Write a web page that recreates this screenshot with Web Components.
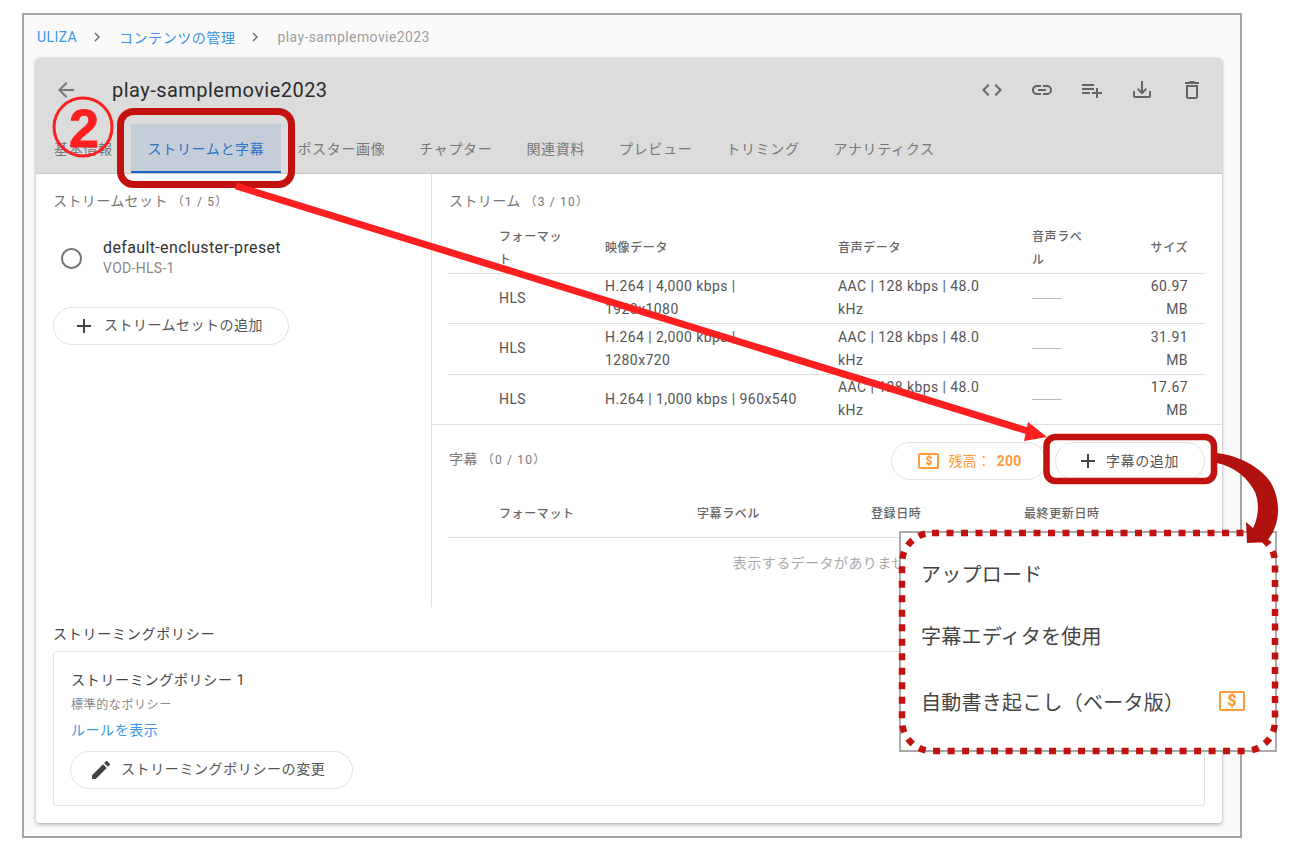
<!DOCTYPE html>
<html lang="ja">
<head>
<meta charset="utf-8">
<title>ULIZA</title>
<style>
html,body{margin:0;padding:0;background:#fff;height:852px;overflow:hidden}
body{font-family:Roboto,"Noto Sans CJK JP",sans-serif;color:#444;position:relative}
</style>
</head>
<body>
<ul-frame>
  <ul-breadcrumb></ul-breadcrumb>
  <ul-card>
    <ul-header slot="header"></ul-header>
    <ul-tabs slot="tabs"></ul-tabs>
    <ul-sets slot="left"></ul-sets>
    <ul-streams slot="right"></ul-streams>
    <ul-captions slot="right"></ul-captions>
    <ul-policy slot="bottom"></ul-policy>
  </ul-card>
</ul-frame>
<ul-annotations></ul-annotations>
<ul-menu></ul-menu>
<script>
const P={
 back:"M20 11H7.83l5.59-5.59L12 4l-8 8 8 8 1.41-1.41L7.83 13H20v-2z",
 code:"M9.4 16.6L4.8 12l4.6-4.6L8 6l-6 6 6 6 1.4-1.4zm5.2 0l4.6-4.6-4.6-4.6L16 6l6 6-6 6-1.4-1.4z",
 link:"M3.9 12c0-1.71 1.39-3.1 3.1-3.1h4V7H7c-2.76 0-5 2.24-5 5s2.24 5 5 5h4v-1.9H7c-1.71 0-3.1-1.39-3.1-3.1zM8 13h8v-2H8v2zm9-6h-4v1.9h4c1.71 0 3.1 1.39 3.1 3.1s-1.39 3.1-3.1 3.1h-4V17h4c2.76 0 5-2.24 5-5s-2.24-5-5-5z",
 list:"M14 10H2v2h12v-2zm0-4H2v2h12V6zm4 8v-4h-2v4h-4v2h4v4h2v-4h4v-2h-4zM2 16h8v-2H2v2z",
 dl:"M19 13v5H5v-5H3v5c0 1.1.9 2 2 2h14c1.1 0 2-.9 2-2v-5h-2zM13 12.67l2.59-2.58L17 11.5l-5 5-5-5 1.41-1.41L11 12.67V3h2z",
 del:"M6 19c0 1.1.9 2 2 2h8c1.1 0 2-.9 2-2V7H6v12zM8 9h8v10H8V9zm7.5-5l-1-1h-5l-1 1H5v2h14V4z",
 plus:"M19 13h-6v6h-2v-6H5v-2h6V5h2v6h6v2z",
 edit:"M3 17.25V21h3.75L17.81 9.94l-3.75-3.75L3 17.25zM20.71 7.04c.39-.39.39-1.02 0-1.41l-2.34-2.34c-.39-.39-1.02-.39-1.41 0l-1.83 1.83 3.75 3.75 1.83-1.83z"
};
const icon=(n,c="#666",s=24)=>`<svg width="${s}" height="${s}" viewBox="0 0 24 24" style="display:block;flex:none"><path fill="${c}" d="${P[n]}"/></svg>`;
const coin=(w,h,fs,b=2)=>`<span style="display:inline-flex;flex:none;align-items:center;justify-content:center;box-sizing:border-box;width:${w}px;height:${h}px;border:${b}px solid #ff9b3d;border-radius:2px;color:#ff9b3d;font:900 ${fs}px/1 Roboto,sans-serif">$</span>`;
const define=(name,html)=>customElements.define(name,class extends HTMLElement{
  constructor(){super();this.attachShadow({mode:"open"}).innerHTML=html;}
});
const pillCss=`.pill{display:inline-flex;align-items:center;box-sizing:border-box;height:38px;border:1px solid #e2e2e2;border-radius:19px;background:#fff;color:#555;font-size:14px;letter-spacing:.5px;white-space:nowrap}
.pill>span.x{margin-bottom:3px}`;

define("ul-frame",`<style>:host{display:block;box-sizing:border-box;width:1220px;height:825px;margin:13px 0 0 22px;border:2px solid #a8a4a4;background:#fafafa;padding:0 18px 0 12px}</style><slot></slot>`);

const chev=`<svg style="margin:0 15px 0 14px;flex:none" width="12" height="12" viewBox="0 0 12 12"><path d="M4 2l4 4-4 4" fill="none" stroke="#666" stroke-width="1.4"/></svg>`;
define("ul-breadcrumb",`<style>:host{display:flex;align-items:center;height:43px;font-size:14px;letter-spacing:.55px;white-space:nowrap}
a{color:#3b95e8}span{color:#9e9e9e;letter-spacing:.4px;margin-left:1px}svg+a{margin-left:1px}</style>
<a style="margin-left:1px;letter-spacing:.4px">ULIZA</a>${chev}<a>コンテンツの管理</a>${chev}<span>play-samplemovie2023</span>`);

define("ul-card",`<style>:host{display:block;height:765px;background:#fff;border-radius:4px;box-shadow:0 2px 4px rgba(0,0,0,.25),0 0 3px rgba(0,0,0,.1);overflow:hidden}
.head{background:#dcdcdc;height:116px;box-sizing:border-box;border-bottom:1px solid #c8c8c8;display:flex;flex-direction:column}
.body{display:grid;grid-template-columns:396px 1fr;height:433px}
.l{border-right:1px solid #e0e0e0;padding:17px 0 0 17px}
</style>
<div class="head"><slot name="header"></slot><slot name="tabs"></slot></div>
<div class="body"><div class="l"><slot name="left"></slot></div><div><slot name="right"></slot></div></div>
<slot name="bottom"></slot>`);

define("ul-header",`<style>:host{display:flex;align-items:center;height:66px;padding:0 18px 2px 18px;box-sizing:border-box}
.t{margin-left:34px;font-size:20px;letter-spacing:.47px;color:#2b2b2b;flex:1}
.i{display:flex;gap:26px}</style>
${icon("back","#777")}<div class="t">play-samplemovie2023</div>
<div class="i">${icon("code")}${icon("link")}${icon("list")}${icon("dl")}${icon("del")}</div>`);

define("ul-tabs",`<style>:host{display:flex;height:49px;padding-left:1px;font-size:14px;letter-spacing:.65px;color:#777;white-space:nowrap}
div{padding:0 17px 2px;display:flex;align-items:center;box-sizing:border-box;height:49px}
div:first-of-type{padding-right:18px}
.a{background:#c5cdd8;color:#2a72c8;border-bottom:2px solid #1565c0;padding:0 17px}
.a+div{padding-left:16px}</style>
<div>基本情報</div><div class="a">ストリームと字幕</div><div>ポスター画像</div><div>チャプター</div><div>関連資料</div><div>プレビュー</div><div>トリミング</div><div>アナリティクス</div>`);

define("ul-sets",`<style>:host{display:block}${pillCss}
h3{margin:0;font-weight:400;font-size:14px;line-height:20px;letter-spacing:.4px;color:#777}
small{font-size:12px;letter-spacing:1.2px}
.item{display:flex;align-items:center;margin-top:26px;height:40px}
.r{box-sizing:border-box;width:21px;height:21px;border:2px solid #757575;border-radius:50%;margin:0 21px 0 8px}
.n{font-size:16px;line-height:20px;padding-top:1px;letter-spacing:.37px;color:#333}
.s{font-size:14px;line-height:21px;letter-spacing:.3px;color:#888}
.pill{margin-top:29px;width:236px;padding-left:18px}.pill svg{margin-right:8px}.pill>span.x{margin-bottom:5px}</style>
<h3>ストリームセット <small>（1 / 5）</small></h3>
<div class="item"><div class="r"></div><div><div class="n">default-encluster-preset</div><div class="s">VOD-HLS-1</div></div></div>
<div class="pill">${icon("plus","#444")}<span class="x">ストリームセットの追加</span></div>`);

const tableCss=`table{border-collapse:collapse;table-layout:fixed;width:757px;margin-left:16px}
th{font-weight:500;font-size:12px;letter-spacing:.6px;color:#666;text-align:left;line-height:23px;padding:0 16px}
td{font-size:14px;letter-spacing:.42px;color:#555;line-height:23px;padding:1.75px 16px;height:46px}
tr{border-bottom:1px solid #e0e0e0}`;
define("ul-streams",`<style>:host{display:block;box-sizing:border-box;height:251px;border-bottom:1px solid #e0e0e0}${tableCss}
h3{margin:0;padding:17px 0 0 17px;font-weight:400;font-size:14px;line-height:20px;letter-spacing:.4px;color:#777}
small{font-size:12px;letter-spacing:1.2px}
thead tr{height:48px}
tbody tr:last-child{border-bottom:0}
.v{padding-right:22px}
.num{text-align:right;padding-left:0;padding-right:17px}.la{padding-right:30px}
.dash{display:block;width:30px;height:1px;background:#bbb}</style>
<h3>ストリーム <small>（3 / 10）</small></h3>
<table style="margin-top:13px"><colgroup><col style="width:35px"><col style="width:106px"><col style="width:233px"><col style="width:194px"><col style="width:103px"><col style="width:86px"></colgroup>
<thead><tr><th></th><th>フォーマット</th><th>映像データ</th><th>音声データ</th><th class="la">音声ラベル</th><th class="num">サイズ</th></tr></thead>
<tbody>
<tr><td></td><td>HLS</td><td class="v">H.264 | 4,000 kbps | 1920x1080</td><td>AAC | 128 kbps | 48.0 kHz</td><td><i class="dash"></i></td><td class="num" style="padding-left:30px">60.97 MB</td></tr>
<tr><td></td><td>HLS</td><td class="v">H.264 | 2,000 kbps | 1280x720</td><td>AAC | 128 kbps | 48.0 kHz</td><td><i class="dash"></i></td><td class="num" style="padding-left:30px">31.91 MB</td></tr>
<tr><td></td><td>HLS</td><td class="v">H.264 | 1,000 kbps | 960x540</td><td>AAC | 128 kbps | 48.0 kHz</td><td><i class="dash"></i></td><td class="num" style="padding-left:30px">17.67 MB</td></tr>
</tbody></table>`);

define("ul-captions",`<style>:host{display:block}${pillCss}${tableCss}
.bar{display:flex;align-items:center;height:38px;margin-top:17px;padding:0 17px}
h3{margin:0 0 6px;flex:1;font-weight:400;font-size:14px;letter-spacing:.4px;color:#777}
small{font-size:12px;letter-spacing:1.2px}
.bal{width:155px;justify-content:center;gap:9px;color:#ff9b3d;margin-right:9px;letter-spacing:.1px;padding-left:3px}.bal b{margin-left:6px;font-weight:700;font-size:14px;letter-spacing:.2px}
.add{width:150px;justify-content:center;letter-spacing:.6px;padding-right:5px}.add svg{margin-right:6px}
thead tr{height:45px}
table{margin-top:12px}
.e{text-align:center;font-size:14px;letter-spacing:.45px;color:#aaa;line-height:50px;width:757px;margin-left:16px}</style>
<div class="bar"><h3>字幕 <small>（0 / 10）</small></h3>
<div class="pill bal">${coin(21,16,12)}<span class="x">残高：<b>200</b></span></div>
<div class="pill add">${icon("plus","#444")}<span class="x">字幕の追加</span></div></div>
<table><colgroup><col style="width:35px"><col style="width:198px"><col style="width:174px"><col style="width:153px"><col></colgroup>
<thead><tr><th></th><th>フォーマット</th><th>字幕ラベル</th><th>登録日時</th><th>最終更新日時</th></tr></thead></table>
<div class="e">表示するデータがありません</div>`);

define("ul-policy",`<style>:host{display:block;padding:16px 17px 0}${pillCss}
h3{margin:0;font-weight:400;font-size:14px;line-height:22px;letter-spacing:.75px;color:#444}
.box{box-sizing:border-box;height:155px;margin-top:6px;border:1px solid #e4e4e4;border-radius:3px;padding:16px 16px}
.t{font-size:14px;line-height:24px;letter-spacing:.7px;color:#444;margin-left:1px}
.s{font-size:12px;line-height:20px;margin-top:3px;letter-spacing:.6px;color:#888;margin-left:1px}
.a{font-size:14px;line-height:24px;margin-top:3px;color:#3b95e8;letter-spacing:.55px;margin-left:1px}
.pill{margin-top:9px;width:283px;padding-left:18px;letter-spacing:.6px}.pill svg{margin-right:8px}.pill>span.x{margin-bottom:4px}</style>
<h3>ストリーミングポリシー</h3>
<div class="box"><div class="t">ストリーミングポリシー 1</div><div class="s">標準的なポリシー</div><div class="a">ルールを表示</div>
<div class="pill">${icon("edit","#444")}<span class="x">ストリーミングポリシーの変更</span></div></div>`);

define("ul-annotations",`<style>:host{position:absolute;left:0;top:0;width:1294px;height:852px;display:block;pointer-events:none;z-index:2}
svg{display:block}text{font-family:"Liberation Sans","Noto Sans CJK JP",sans-serif}</style>
<svg width="1294" height="852" viewBox="0 0 1294 852">
<circle cx="83" cy="127" r="29" fill="none" stroke="#fe2020" stroke-width="3"/>
<text x="84" y="147" text-anchor="middle" font-size="54" font-weight="700" fill="#fe2020" stroke="#fe2020" stroke-width=".8">2</text>
<rect x="120.500" y="111.500" width="171" height="73" rx="13" fill="none" stroke="#c1120f" stroke-width="7"/>
<rect x="1046.500" y="437" width="167.500" height="44" rx="9" fill="none" stroke="#c1120f" stroke-width="6.500"/>
<path d="M236 186L1031 432" stroke="#fe2020" stroke-width="7" fill="none"/>
<path d="M1047 437L1028 422L1024 441z" fill="#fe2020"/>
</svg>`);

define("ul-menu",`<style>:host{position:absolute;left:899px;top:531px;width:378px;height:221px;box-sizing:border-box;display:block;background:#fff;border:2px solid #aaa;z-index:3;font-size:20px;letter-spacing:.25px;color:#444}
svg.o{position:absolute;left:-2px;top:-2px;pointer-events:none;overflow:visible}
.m{position:absolute;left:0;right:0;top:0;display:flex;flex-direction:column;padding:9px 0 0 20px}
.r{display:flex;align-items:center;height:62px;white-space:nowrap}
.r.z{height:70px}
.r span.g{flex:1}</style>
<div class="m"><div class="r">アップロード</div><div class="r">字幕エディタを使用</div>
<div class="r z"><span class="g">自動書き起こし（ベータ版）</span><span style="margin-right:30px;display:flex">${coin(26,20,16,2.5)}</span></div></div>
<svg class="o" width="378" height="221" viewBox="0 0 378 221"><rect x="3" y="2" width="373" height="218" rx="30" fill="none" stroke="#c1120f" stroke-width="6.500" stroke-dasharray="7 7.5"/>
<g transform="translate(-899 -531)"><path d="M1217 453C1240 456 1262 468 1271 483C1279 497 1280 515 1275 527C1273 533 1270 537 1267 541L1273 542L1247 543L1246 522L1253 528C1258 518 1260 505 1255 492C1248 478 1235 467 1217 463z" fill="#b01210"/></g></svg>`);
</script>
</body>
</html>
